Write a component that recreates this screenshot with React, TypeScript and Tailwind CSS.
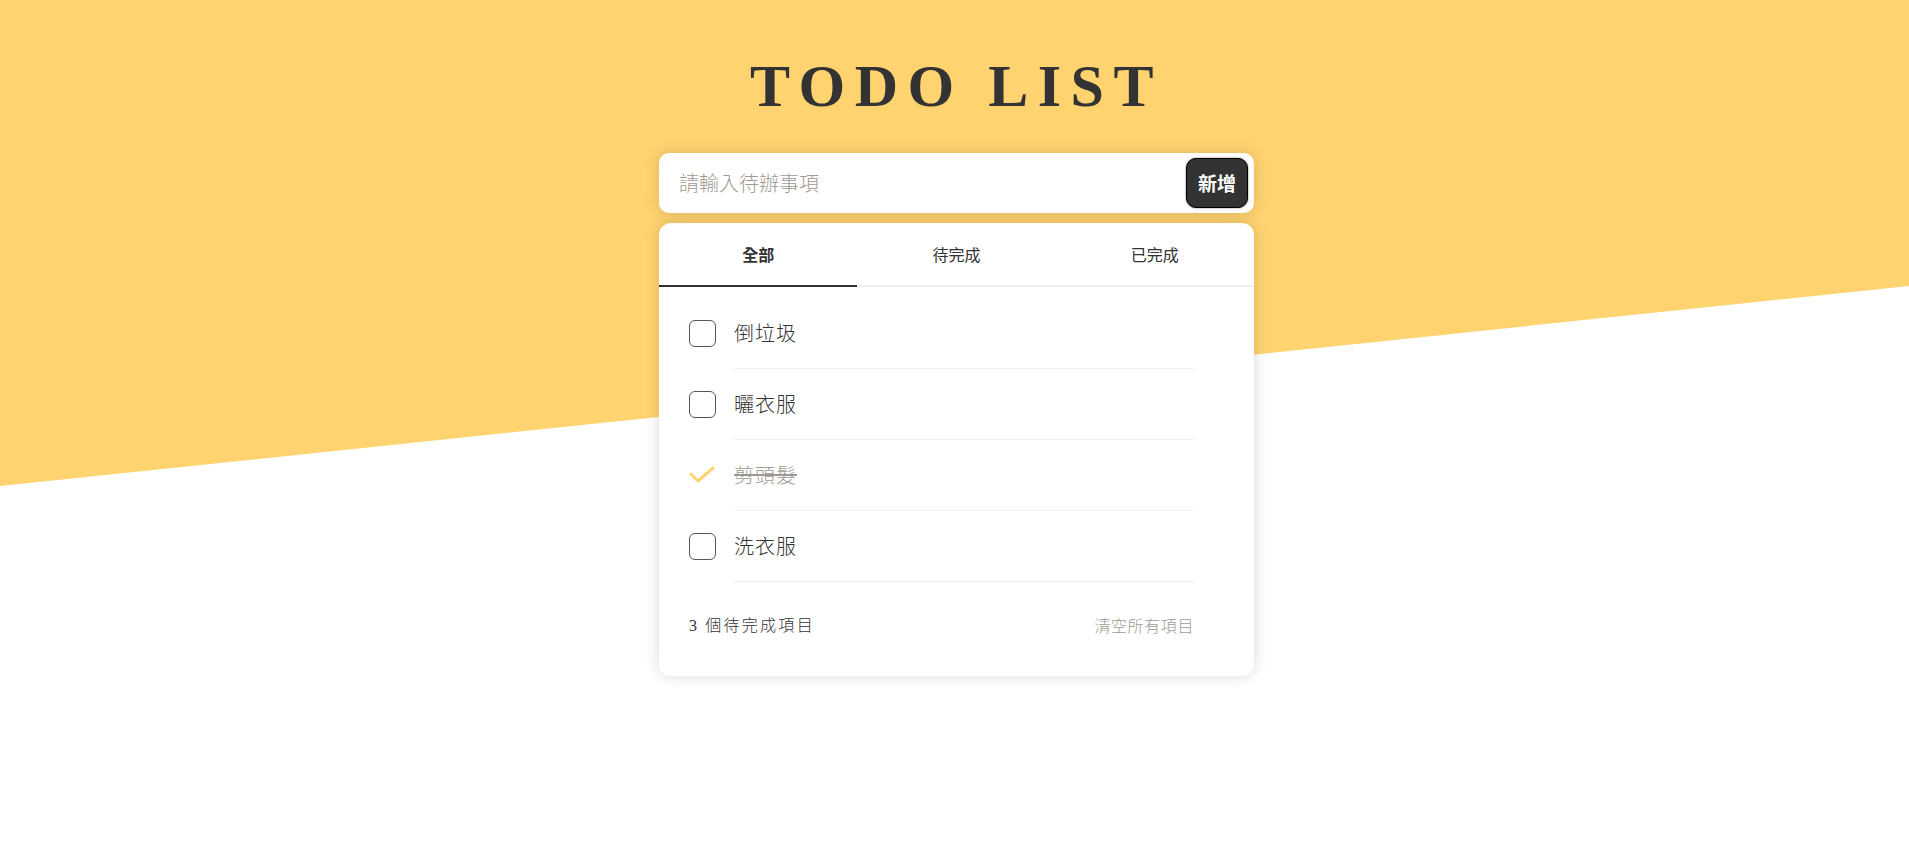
import React from "react";

const cjk = { fontFamily: '"Noto Sans CJK TC", "Noto Sans", sans-serif' };

const items = [
  { text: "倒垃圾", done: false },
  { text: "曬衣服", done: false },
  { text: "剪頭髮", done: true },
  { text: "洗衣服", done: false },
];

export default function App() {
  return (
    <div className="relative w-full min-h-[857px] bg-white overflow-hidden" style={cjk}>
      <svg className="absolute left-0 top-0" width="1909" height="500" viewBox="0 0 1909 500">
        <polygon points="0,0 1909,0 1909,286 0,486" fill="#FFD370" />
      </svg>
      <div className="relative flex flex-col items-center pl-[4px]">
        <h1
          className="pt-[56px] text-[60px] leading-[60px] font-bold tracking-[9.5px] text-[#333333] mb-[37px]"
          style={{ fontFamily: '"Liberation Serif", "Times New Roman", serif' }}
        >
          TODO LIST
        </h1>
        <div className="w-[595px] h-[60px] bg-white rounded-[10px] shadow-[0_0_15px_rgba(0,0,0,0.15)] flex items-center justify-between pl-[20px] pr-[6px]">
          <span className="text-[20px] font-light text-[#9F9A91]">請輸入待辦事項</span>
          <button className="w-[62px] h-[50px] rounded-[10px] bg-[#333333] border border-black text-white text-[19px] font-bold shadow-[0_0_2px_rgba(0,0,0,0.6)]">
            新增
          </button>
        </div>
        <div className="mt-[10px] w-[595px] bg-white rounded-[12px] shadow-[0_0_15px_rgba(0,0,0,0.15)] overflow-hidden">
          <div className="grid grid-cols-3 text-[16px] text-[#333333]">
            <div className="h-[64px] flex items-center justify-center font-bold border-b-2 border-[#333333]">全部</div>
            <div className="h-[64px] flex items-center justify-center border-b-2 border-[#EFEFEF]">待完成</div>
            <div className="h-[64px] flex items-center justify-center border-b-2 border-[#EFEFEF]">已完成</div>
          </div>
          <ul className="pt-[11px] pl-[30px] pr-[60px]">
            {items.map((it) => (
              <li key={it.text} className="flex items-center">
                <div className="w-[27px] h-[27px] flex items-center justify-center shrink-0">
                  {it.done ? (
                    <svg width="27" height="27" viewBox="0 0 27 27">
                      <polyline
                        points="2,12 9,19 24,6"
                        fill="none"
                        stroke="#FFD370"
                        strokeWidth="3"
                        strokeLinecap="round"
                        strokeLinejoin="round"
                      />
                    </svg>
                  ) : (
                    <div className="w-[27px] h-[27px] rounded-[6px] border border-[#555555]" />
                  )}
                </div>
                <div className="ml-[18px] flex-1 h-[71px] flex items-center border-b border-[#EFEFEF]">
                  <span
                    className={
                      it.done
                        ? "text-[20px] font-light tracking-[1px] text-[#9F9A91] line-through decoration-[#9F9A91] decoration-2"
                        : "text-[20px] font-light tracking-[1px] text-[#333333]"
                    }
                  >
                    {it.text}
                  </span>
                </div>
              </li>
            ))}
          </ul>
          <div className="flex items-center justify-between pl-[30px] pr-[60px] pt-[30px] pb-[38px] leading-[24px]">
            <span className="text-[16px] font-light text-[#333333] tracking-[2.3px]">
              <span className="font-normal" style={{ fontFamily: '"Liberation Serif", serif' }}>3</span> 個待完成項目
            </span>
            <span className="text-[16px] font-light text-[#9F9A91] tracking-[0.6px]">清空所有項目</span>
          </div>
        </div>
      </div>
    </div>
  );
}
